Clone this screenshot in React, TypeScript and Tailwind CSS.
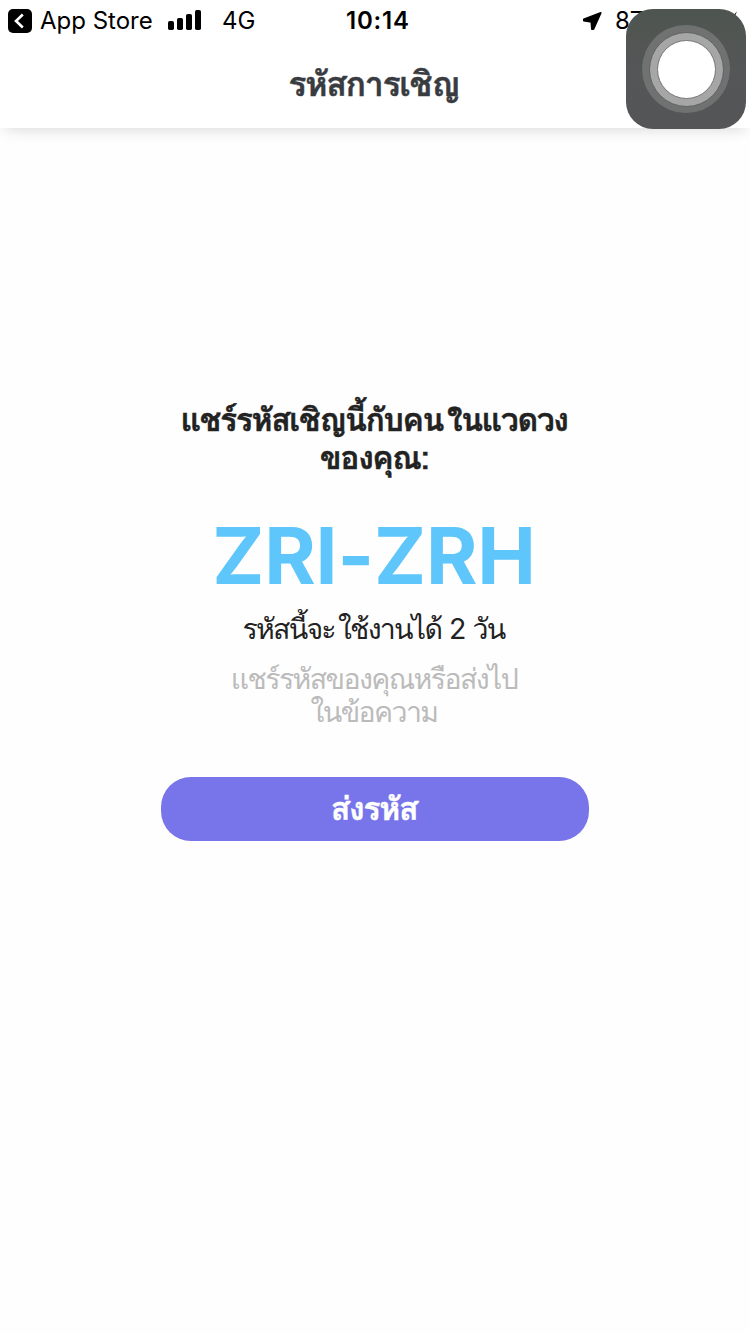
function StatusBar() {
  return (
    <div className="flex h-10 items-center pt-[2px] font-['Inter',sans-serif] text-[24px] leading-[40px] text-black">
      <div className="flex w-[346px] items-center">
        <svg className="ml-2 shrink-0" width="24" height="24" viewBox="0 0 24 24">
          <rect width="24" height="24" rx="5" fill="#000" />
          <path d="M14.8 5.5 8 12l6.800 6.500" fill="none" stroke="#fff" strokeWidth="2.600" />
        </svg>
        <span className="ml-2 w-[128px] whitespace-nowrap">App Store</span>
        <svg className="mb-[2px] shrink-0" width="33" height="20" viewBox="0 0 33 20" fill="#000">
          <rect x="0" y="11" width="6" height="9" rx="1.800" />
          <rect x="9" y="8" width="6" height="12" rx="1.800" />
          <rect x="18" y="4" width="6" height="16" rx="1.800" />
          <rect x="27" y="0" width="6" height="20" rx="1.800" />
        </svg>
        <span className="ml-[21px]">4G</span>
      </div>
      <span className="w-[236px] font-semibold tracking-[0.8px]">10:14</span>
      <svg className="shrink-0" width="20" height="20" viewBox="0 0 20 20">
        <path d="M18.800 1.800 11.500 18.200 9.800 18.200 9.300 11 1.800 9.800 1.800 8.300Z" fill="#000" stroke="#000" strokeWidth="1.600" strokeLinejoin="round" />
      </svg>
      <span className="ml-[13px]">87%</span>
      <svg className="ml-auto mr-3 shrink-0" width="12" height="20" viewBox="0 0 12 20">
        <path d="M11 .5 1 11h4L2 19.500 11.500 8H7.500Z" fill="#000" />
      </svg>
    </div>
  );
}

function AssistiveTouch() {
  return (
    <div className="absolute left-[626px] top-[9px] flex size-[120px] items-center justify-center rounded-[27px] bg-linear-to-b from-[#4e554f] via-[#545657] to-[#555557]">
      <div className="flex size-[88px] items-center justify-center rounded-full bg-[#707272]">
        <div className="flex size-[75px] items-center justify-center rounded-full border border-[#606262] bg-[#a6a6a7]">
          <div className="size-[59px] rounded-full border border-[#777] bg-white" />
        </div>
      </div>
    </div>
  );
}

export default function App() {
  return (
    <div className="relative flex h-[1334px] w-[750px] flex-col overflow-hidden bg-[#fefefe] text-center">
      <header className="h-32 shrink-0 bg-white text-left shadow-[0_6px_14px_-5px_rgba(0,0,0,0.16)]">
        <StatusBar />
        <h1 className="pt-6 pr-[3px] text-center font-['Loma','Inter',sans-serif] text-[34px] leading-[40px] font-bold tracking-[-1.4px] text-[#383b40] [-webkit-text-stroke:0.4px_#383b40]">รหัสการเชิญ</h1>
      </header>
      <main className="flex flex-col items-center pt-[273px] font-['Loma','Inter',sans-serif] text-[#222]">
        <h2 className="mr-[2px] text-[32px] leading-[38px] font-bold tracking-[-1.4px] [-webkit-text-stroke:0.4px_#222]">
          <span className="block">แชร์รหัสเชิญนี้กับคน<span className="ml-1">ในแวดวง</span></span>
          <span className="block">ของคุณ:</span>
        </h2>
        <p className="mt-[31px] mr-[2px] font-['Inter',sans-serif] text-[78.5px] leading-[96px] font-bold tracking-[-0.2px] text-[#5ec6fb] [font-feature-settings:'calt'_0]">ZRI-ZRH</p>
        <p className="mt-[7px] mr-[3px] text-[28.5px] leading-[36px] tracking-[-1.75px]">
          รหัสนี้จะ<span className="ml-[3px]">ใช้งานได้</span> <span className="font-['Inter',sans-serif]">2</span> วัน
        </p>
        <p className="mt-[16px] mr-[2px] text-[28.5px] leading-[33px] tracking-[-1.6px] text-[#bbb]">
          <span className="block">แชร์รหัสของคุณหรือส่งไป</span>
          <span className="block">ในข้อความ</span>
        </p>
        <button className="mt-[48px] h-16 w-[428px] rounded-[30px] bg-[#7874ea] pr-[2px] text-[32px] leading-[64px] font-bold tracking-[-1.3px] text-white [-webkit-text-stroke:0.4px_#fff]">ส่งรหัส</button>
      </main>
      <AssistiveTouch />
    </div>
  );
}
